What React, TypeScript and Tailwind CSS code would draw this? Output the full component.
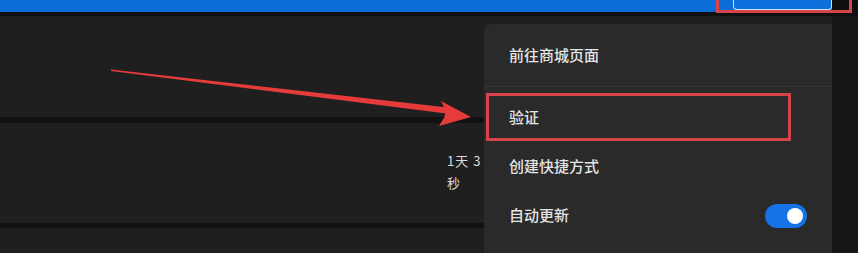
import React from "react";

const font = { fontFamily: '"Noto Sans CJK SC", "Noto Sans", sans-serif' };

function Toggle() {
  return (
    <div className="flex h-[24px] w-[42px] items-center justify-end rounded-full bg-[#1473e6] pr-[4px]">
      <div className="h-[16px] w-[16px] rounded-full bg-white" />
    </div>
  );
}

function MenuItem({ label, right }: { label: string; right?: React.ReactNode }) {
  return (
    <div className="flex h-[49px] items-center justify-between pl-[25px] pr-[25px] text-[15px] font-medium text-[#e4e4e4]">
      <span>{label}</span>
      {right}
    </div>
  );
}

function Menu() {
  return (
    <div className="absolute left-[484px] top-[24px] h-[240px] w-[348px] rounded-tl-[6px] bg-[#2a2a2a]">
      <div className="flex h-[62px] items-center pl-[25px] text-[15px] font-medium text-[#e4e4e4]">前往商城页面</div>
      <div className="h-px bg-[#373737]" />
      <div className="h-[6px]" />
      <MenuItem label="验证" />
      <MenuItem label="创建快捷方式" />
      <MenuItem label="自动更新" right={<Toggle />} />
    </div>
  );
}

function Arrow() {
  return (
    <svg className="absolute left-0 top-0" width="858" height="253" viewBox="0 0 858 253">
      <polygon points="111,69.5 448,107.5 446,113.5 111,71" fill="#e53b3b" />
      <polygon points="471,117 441,101 446,111 444,118 439,126" fill="#e53b3b" />
    </svg>
  );
}

export default function App() {
  return (
    <div className="relative h-[253px] w-[858px] overflow-hidden bg-[#1e1e1e]" style={font}>
      <div className="flex h-[12px]">
        <div className="flex flex-1 justify-end bg-[#0b6dd8]">
          <div className="h-[10px] w-[99px] rounded-b-[4px] border-x border-b border-[#cfe3ff] bg-[#0c6fdc]" />
        </div>
        <div className="w-[26px] bg-[#0f0f0f]" />
      </div>
      <div className="h-[4px] bg-[#101010]" />
      <div className="flex">
        <div className="flex-1">
          <div className="h-[101px] bg-[#1f1f1f]" />
          <div className="h-[6px] bg-[#121212]" />
          <div className="h-[100px] bg-[#1f1f1f] pl-[447px] pt-[27px] text-[13px] leading-[22px] tracking-[1px] text-[#dcdcdc]">
            <div>1天 3 小时</div>
            <div>秒</div>
          </div>
          <div className="h-[5px] bg-[#121212]" />
          <div className="h-[40px] bg-[#1f1f1f]" />
        </div>
        <div className="w-[26px] bg-[#151515]" />
      </div>
      <Menu />
      <Arrow />
      <div className="absolute left-[716px] top-[-4px] h-[17px] w-[136px] border-[3px] border-[#d6434b]" />
      <div className="absolute left-[486px] top-[93px] h-[48px] w-[305px] border-[3px] border-[#d6434b]" />
    </div>
  );
}
